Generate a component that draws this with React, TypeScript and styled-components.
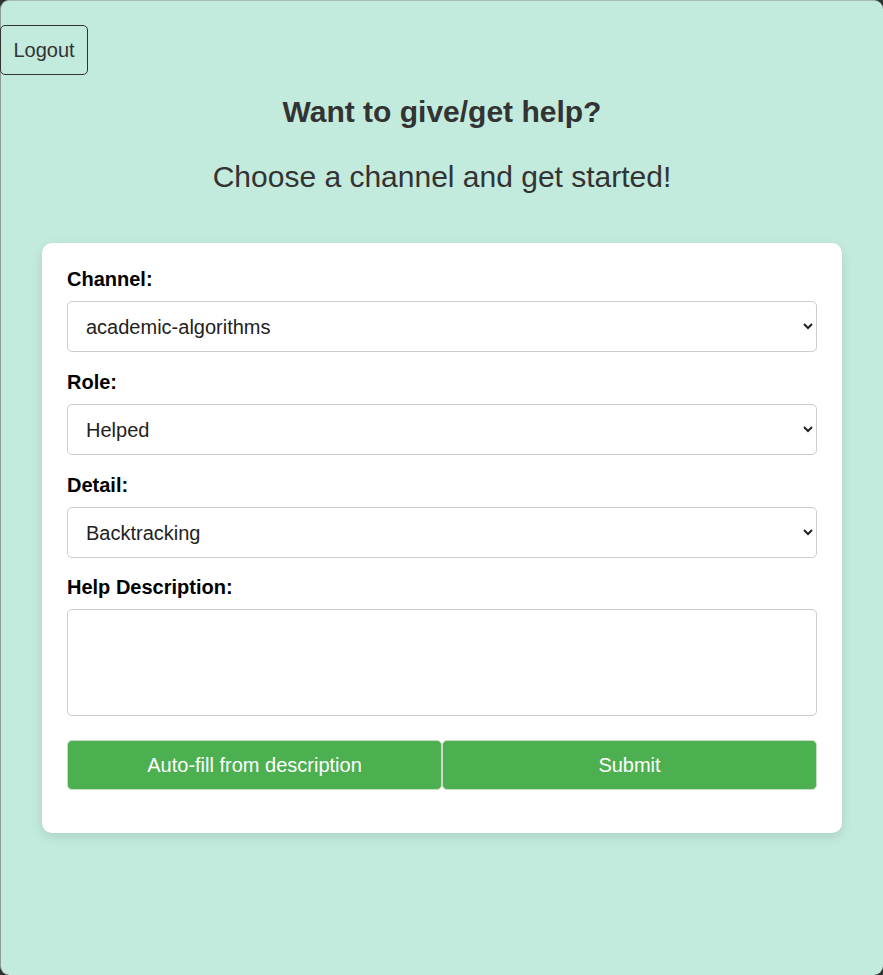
import React from "react";
import styled, { createGlobalStyle } from "styled-components";

const Global = createGlobalStyle`
  html, body {
    margin: 0;
    padding: 0;
    background: #2f3230;
  }
  body {
    font-family: "Liberation Sans", Arial, sans-serif;
  }
  * { box-sizing: border-box; }
`;

const Frame = styled.div`
  min-height: 975px;
  background: #c2eadd;
  border-radius: 9px;
  border-top: 1px solid #a9bdb6;
  border-left: 1px solid #8b9a95;
  display: flex;
  flex-direction: column;
  align-items: stretch;
  color: #333;
`;

const TopBar = styled.div`
  display: flex;
  padding-top: 24px;
`;

const LogoutButton = styled.button`
  width: 88px;
  height: 50px;
  margin-left: -1px;
  font-family: "Liberation Sans", Arial, sans-serif;
  font-size: 20px;
  color: #333;
  background: transparent;
  border: 1px solid #333;
  border-radius: 5px;
  padding: 0;
  cursor: pointer;
`;

const Title = styled.h2`
  margin: 19px 0 0;
  text-align: center;
  font-size: 30px;
  line-height: 35px;
  font-weight: bold;
  color: #333;
`;

const Subtitle = styled.p`
  margin: 30px 0 0;
  text-align: center;
  font-size: 30px;
  line-height: 35px;
  font-weight: normal;
  color: #333;
`;

const Card = styled.form`
  width: 800px;
  margin: 49px auto 0;
  background: #fff;
  border-radius: 10px;
  padding: 25px 25px 43px;
  box-shadow: 0 4px 12px rgba(0, 0, 0, 0.1);
  display: flex;
  flex-direction: column;
`;

const Label = styled.label<{ $gap?: number }>`
  display: block;
  font-size: 20px;
  line-height: 22px;
  font-weight: bold;
  color: #000;
  margin-top: ${(p) => (p.$gap ?? 19)}px;
  margin-bottom: 11px;
`;

const Select = styled.select`
  width: 100%;
  height: 51px;
  font-family: "Liberation Sans", Arial, sans-serif;
  font-size: 20px;
  color: #222;
  background: #fff;
  border: 1px solid #ccc;
  border-radius: 5px;
  padding: 0 10px 0 14px;
`;

const TextArea = styled.textarea`
  width: 100%;
  height: 107px;
  font-family: "Liberation Sans", Arial, sans-serif;
  font-size: 20px;
  border: 1px solid #ccc;
  border-radius: 5px;
  padding: 12px;
  resize: none;
  display: block;
`;

const ButtonRow = styled.div`
  display: flex;
  margin-top: 24px;
`;

const GreenButton = styled.button`
  flex: 1 1 0;
  height: 50px;
  background: #4caf50;
  color: #fff;
  font-family: "Liberation Sans", Arial, sans-serif;
  font-size: 20px;
  border: 1px solid #c9dcc9;
  border-radius: 5px;
  padding: 0;
  cursor: pointer;
`;

export default function App() {
  return (
    <>
      <Global />
      <Frame>
        <TopBar>
          <LogoutButton type="button">Logout</LogoutButton>
        </TopBar>
        <Title>Want to give/get help?</Title>
        <Subtitle>Choose a channel and get started!</Subtitle>
        <Card onSubmit={(e) => e.preventDefault()}>
          <Label $gap={0} htmlFor="channel">Channel:</Label>
          <Select id="channel" defaultValue="academic-algorithms">
            <option value="academic-algorithms">academic-algorithms</option>
          </Select>
          <Label htmlFor="role">Role:</Label>
          <Select id="role" defaultValue="Helped">
            <option value="Helped">Helped</option>
            <option value="Helper">Helper</option>
          </Select>
          <Label htmlFor="detail">Detail:</Label>
          <Select id="detail" defaultValue="Backtracking">
            <option value="Backtracking">Backtracking</option>
          </Select>
          <Label $gap={18} htmlFor="desc">Help Description:</Label>
          <TextArea id="desc" />
          <ButtonRow>
            <GreenButton type="button">Auto-fill from description</GreenButton>
            <GreenButton type="submit">Submit</GreenButton>
          </ButtonRow>
        </Card>
      </Frame>
    </>
  );
}
